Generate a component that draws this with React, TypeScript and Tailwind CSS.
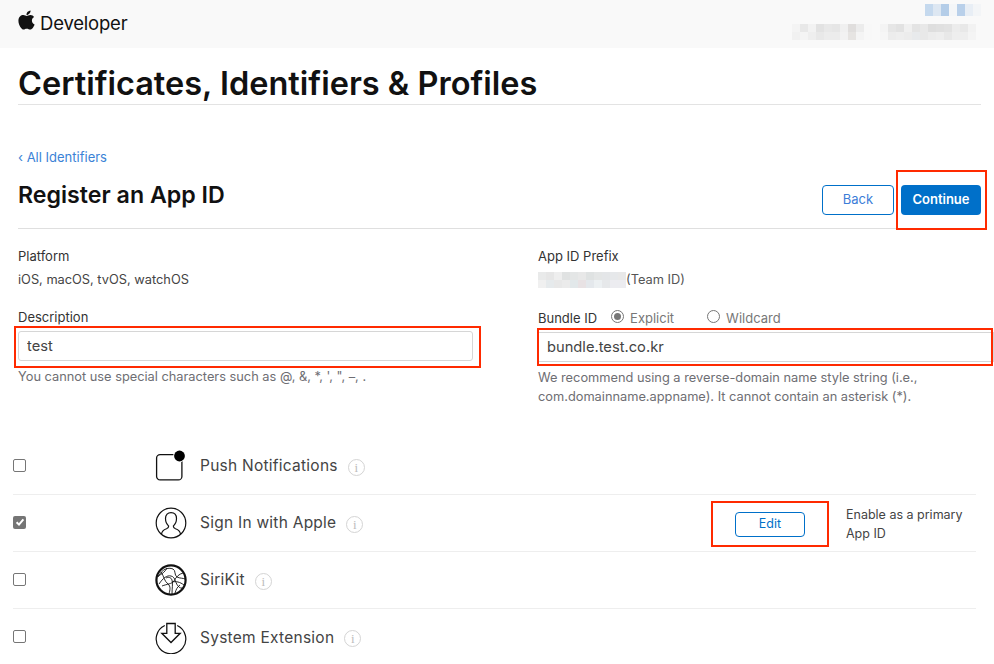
import { FaApple } from "react-icons/fa";

const font = { fontFamily: "Inter, 'Liberation Sans', sans-serif" };

// pixelated redaction blocks
function Pixels({ rows, size = 8, height }: { rows: string[][]; size?: number; height?: number }) {
  return (
    <div className="flex flex-col">
      {rows.map((row, i) => (
        <div key={i} className="flex">
          {row.map((c, j) => (
            <div key={j} style={{ width: size, height: height ?? size, background: c }} />
          ))}
        </div>
      ))}
    </div>
  );
}

function InfoIcon() {
  return (
    <span className="ml-[10px] mt-[2px] flex h-[17px] w-[17px] shrink-0 items-center justify-center rounded-full border border-[#d4d4d4] font-['Liberation_Serif',serif] text-[13px] leading-none text-[#bdbdbd]">
      i
    </span>
  );
}

function Checkbox({ checked = false }: { checked?: boolean }) {
  if (checked) {
    return (
      <div className="-mt-[2px] flex h-[13px] w-[13px] items-center justify-center rounded-[2px] bg-[#757575]">
        <svg width="10" height="10" viewBox="0 0 10 10" fill="none">
          <path d="M1.6 5.2 4 7.6 8.4 2.4" stroke="#fff" strokeWidth="2" />
        </svg>
      </div>
    );
  }
  return <div className="-mt-[2px] h-[13px] w-[13px] rounded-[2px] border border-[#767676] bg-white" />;
}

function PushIcon() {
  return (
    <svg width="32" height="32" viewBox="0 0 32 32" fill="none">
      <rect x="1.6" y="4.6" width="25.3" height="25.3" rx="3.5" stroke="#111" strokeWidth="1.3" />
      <circle cx="24.5" cy="6" r="6.2" fill="#fff" />
      <circle cx="24.5" cy="6" r="5.4" fill="#000" />
    </svg>
  );
}

function PersonIcon() {
  return (
    <svg width="32" height="32" viewBox="0 0 32 32" fill="none" stroke="#111" strokeWidth="1.2">
      <circle cx="16" cy="16" r="14.8" />
      <path d="M6.5 27.2c.4-3.3 2.4-4.6 5-5.5 1.6-.6 2.2-1.2 2.2-2.6-2-1.8-3.2-4.4-3.2-7.5C10.500 7.800 12.800 5.600 16 5.600s5.500 2.200 5.500 6c0 3.100-1.200 5.700-3.200 7.500 0 1.400.6 2 2.200 2.600 2.600.9 4.600 2.200 5 5.500" />
    </svg>
  );
}

function SiriIcon() {
  return (
    <svg width="32" height="32" viewBox="0 0 32 32" fill="none" stroke="#111">
      <circle cx="16" cy="16" r="14.6" strokeWidth="2.2" />
      <g strokeWidth="0.9">
        <path d="M3 13C7 5 13 3 18 5c3 1.500 1 6 4 8 3 1.500 6 1 8 2" />
        <path d="M4 20c4-6 8-9 12-8 5 1 4 8 8 11 1 1 2 1 3 1" />
        <path d="M6 8c3 4 3 9 7 12 3 2.500 2 6 1 10" />
        <path d="M12 4c-2 4-5 6-9 8M17 30c0-6 1-10 0-14-1-3-4-3-6-2" />
        <path d="M28 9c-4 1-7 4-9 8-2 3-7 3-12 5" />
        <path d="M17 18c4-1 8 0 12 3M20 29c1-3 2-6 5-8" />
      </g>
    </svg>
  );
}

function ExtensionIcon() {
  return (
    <svg width="32" height="32" viewBox="0 0 32 32" fill="none" stroke="#111" strokeWidth="1.2">
      <path d="M9.800 3.500A14.800 14.800 0 1 0 22.200 3.500" />
      <path d="M11.800 1.500h8.400v9.800h5L16 20.500l-9.200-9.200h5z" strokeWidth="1.300" />
    </svg>
  );
}

const capabilities = [
  { name: "Push Notifications", icon: <PushIcon /> },
  { name: "Sign In with Apple", icon: <PersonIcon />, checked: true, edit: true },
  { name: "SiriKit", icon: <SiriIcon /> },
  { name: "System Extension", icon: <ExtensionIcon /> },
];

const userPixels = [
  ["#f4f4f4", "#e8e8e8", "#f2f2f2", "#e2e2e2", "#e8e8e8", "#e6e6e6", "#f0f0f0", "#e0dedd", "#ececec", "#f8f8f8", "#f9f9f9", "#f4f4f4", "#e6e6e6", "#e2e2e2", "#f0f0f0", "#e4e4e4", "#e8e8e8", "#dedede", "#e0e0e0", "#e2e2e2", "#ececec", "#e8e8e8", "#f2f2f2"],
  ["#f1f1f1", "#f4f4f4", "#eeeeee", "#e8e8e8", "#ececec", "#ececec", "#f2f2f2", "#e6e4e2", "#f4f4f4", "#f8f8f8", "#f9f9f9", "#f6f6f6", "#ececec", "#eeeeee", "#ececec", "#e8eaec", "#e8e8e8", "#ececec", "#eeeeee", "#e8e8e8", "#eeeeee", "#eeeeee", "#f4f4f4"],
];

const topPixels = [["#c5d9ee", "#dde7f2", "#b4cde8", "#f4f6f8", "#b9d0ea", "#e8eef5", "#f3f5f7"]];

const teamPixels = [
  ["#e9eaea", "#e6e6e6", "#eeeeee", "#e0e2e2", "#e4e6e6", "#e8e8e8", "#dfe2e2", "#e4e6e6", "#e4e6e8", "#e6e8ea", "#e8e8e8"],
  ["#f0f0f0", "#e6eaec", "#e8e8e8", "#ebebeb", "#e2e8ea", "#e8e2e4", "#e4e8ec", "#ecf0f2", "#e6e8ea", "#ececf0", "#ececf0"],
];

const labelText = "text-[13px] leading-[16px] text-[#333]";
const helpText = "text-[12.8px] text-[#6e6e73]";

export default function App() {
  return (
    <div className="relative h-[664px] w-[994px] overflow-hidden bg-white" style={font}>
      <header className="flex h-12 items-start justify-between bg-[#f9f9f9] pl-[18px] pr-[13px]">
        <div className="mt-[5px] flex items-center text-[#111]">
          <FaApple className="h-[22px] w-[17px]" />
          <span className="ml-[5px] mt-[6px] text-[18.5px] leading-[24px] tracking-[-0.2px]">Developer</span>
        </div>
        <div className="mt-[4px] flex flex-col items-end">
          <Pixels rows={topPixels} size={8} height={12} />
          <div className="mr-[5px] mt-[8px]">
            <Pixels rows={userPixels} size={8} />
          </div>
        </div>
      </header>

      <main className="pl-[18px] pr-[13px]">
        <h1 className="mt-[15px] h-[42px] border-b border-[#e3e3e3] text-[32.5px] font-semibold leading-[42px] text-[#111]">
          <span className="block h-[42px]">Certificates, Identifiers &amp; Profiles</span>
        </h1>

        <div className="mt-[44px] text-[13px] leading-[16px] text-[#3b82d6]">‹ All Identifiers</div>

        <div className="flex h-[64px] items-start justify-between border-b border-[#dfdfdf]">
          <h2 className="mt-[16px] text-[23.2px] font-semibold leading-[28px] text-[#111]">Register an App ID</h2>
          <div className="mt-[20px] flex gap-[7px] text-[13px]">
            <button className="h-[30px] w-[72px] rounded-[4px] border border-[#0070c9] bg-white text-[#3b7dd8]">Back</button>
            <button className="h-[30px] w-[80px] rounded-[4px] bg-[#0070c9] font-semibold text-white">Continue</button>
          </div>
        </div>

        <section className="mt-[19px] flex">
          <div className="w-[455px]">
            <div className={labelText}>Platform</div>
            <div className="mt-[8px] text-[12.8px] leading-[16px] text-[#444]">iOS, macOS, tvOS, watchOS</div>
            <div className={`mt-[21px] ${labelText}`}>Description</div>
            <input
              readOnly
              value="test"
              className="mt-[6px] block h-[30px] w-[455px] rounded-[3px] border border-[#d6d6d6] px-[8px] text-[14.7px] text-[#444] outline-none"
            />
            <div className={`mt-[8px] leading-[16px] ${helpText}`}>You cannot use special characters such as @, &amp;, *, ', ", –, .</div>
          </div>

          <div className="ml-[65px] flex-1">
            <div className={labelText}>App ID Prefix</div>
            <div className="mt-[8px] flex h-[16px] items-center text-[12.8px] text-[#555]">
              <Pixels rows={teamPixels} size={8} />
              <span className="ml-[0px]">(Team ID)</span>
            </div>
            <div className="mt-[22px] flex items-center text-[13px] leading-[16px]">
              <span className="text-[#333]">Bundle ID</span>
              <span className="ml-[14px] -mt-[3px] flex h-[13px] w-[13px] items-center justify-center rounded-full border border-[#767676]">
                <span className="h-[7px] w-[7px] rounded-full bg-[#767676]" />
              </span>
              <span className="ml-[6px] text-[#777]">Explicit</span>
              <span className="ml-[33px] -mt-[3px] h-[13px] w-[13px] rounded-full border border-[#767676]" />
              <span className="ml-[6px] text-[#777]">Wildcard</span>
            </div>
            <input
              readOnly
              value="bundle.test.co.kr"
              className="mt-[6px] block h-[30px] w-[456px] border border-[#d6d6d6] px-[8px] text-[14.7px] text-[#444] outline-none"
            />
            <div className={`mt-[6px] leading-[19px] ${helpText}`}>
              We recommend using a reverse-domain name style string (i.e.,
              <br />
              com.domainname.appname). It cannot contain an asterisk (*).
            </div>
          </div>
        </section>
      </main>

      <div className="ml-[13px] mt-[32px] w-[963px]">
        {capabilities.map((cap, i) => (
          <div
            key={cap.name}
            className={`flex h-[57px] items-center ${i < capabilities.length - 1 ? "border-b border-[#eeeeee]" : ""}`}
          >
            <div className="w-[142px]">
              <Checkbox checked={cap.checked} />
            </div>
            <div className="flex w-[45px]">{cap.icon}</div>
            <span className="text-[15.5px] tracking-[0.25px] text-[#444]">{cap.name}</span>
            <InfoIcon />
            {cap.edit && (
              <div className="ml-auto mt-[2px] flex items-center">
                <button className="h-[25px] w-[70px] rounded-[4px] border border-[#0070c9] bg-white text-[12.5px] text-[#0070c9]">Edit</button>
                <div className="ml-[41px] w-[130px] text-[12.5px] leading-[19px] text-[#444]">
                  Enable as a primary
                  <br />
                  App ID
                </div>
              </div>
            )}
          </div>
        ))}
      </div>

      {/* red annotation boxes drawn over the screenshot */}
      <div className="absolute left-[896px] top-[170px] h-[60px] w-[91px] border-2 border-[#ff2a00]" />
      <div className="absolute left-[14px] top-[326px] h-[42px] w-[467px] border-2 border-[#ff2a00]" />
      <div className="absolute left-[537px] top-[328px] h-[38px] w-[456px] border-2 border-[#ff2a00]" />
      <div className="absolute left-[711px] top-[501px] h-[46px] w-[118px] border-2 border-[#ff2a00]" />
    </div>
  );
}
